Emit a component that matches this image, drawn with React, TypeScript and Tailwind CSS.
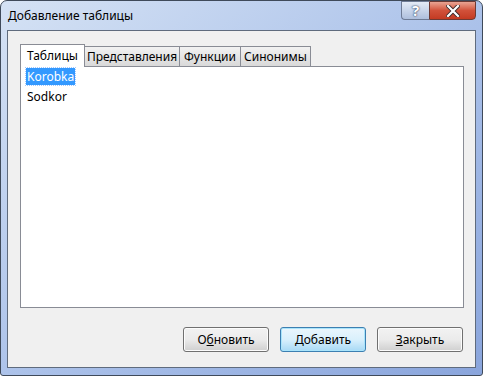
import React from 'react';

const font = { fontFamily: '"Noto Sans", "Open Sans", sans-serif' };

const tabs = ['Таблицы', 'Представления', 'Функции', 'Синонимы'];
const tabWidths = ['w-[65px]', 'w-[95px]', 'w-[61px]', 'w-[70px]'];

const DialogButton: React.FC<{ children: React.ReactNode; primary?: boolean }> = ({ children, primary }) => (
  <button
    className={`w-[86px] h-[25px] rounded-[3px] border text-[12px] text-black flex items-center justify-center ${
      primary
        ? 'border-[#3c7fb1] bg-gradient-to-b from-[#eaf6fd] via-[#d9f0fc] to-[#a7d9f5] shadow-[inset_0_0_0_1px_#a9e4fb]'
        : 'border-[#707070] bg-gradient-to-b from-[#f2f2f2] via-[#ebebeb] to-[#cfcfcf] shadow-[inset_0_0_0_1px_#fcfcfc]'
    }`}
  >
    {children}
  </button>
);

export default function App() {
  return (
    <div className="w-[483px] h-[376px] bg-white" style={font}>
      <div className="w-[483px] h-[376px] rounded-t-[7px] rounded-b-[3px] border border-[#3f4a5a] bg-gradient-to-br from-[#d5e2f4] via-[#adc3ea] to-[#8aa5dc] flex flex-col">
        {/* Title bar */}
        <div className="h-[29px] flex items-start justify-between">
          <div className="pl-[7px] pt-[6px] text-[12px] text-black">Добавление таблицы</div>
          <div className="flex mr-[6px]">
            <div className="w-[28px] h-[19px] border border-[#6d7b95] border-r-0 rounded-bl-[4px] bg-gradient-to-b from-[#e3ebf6] via-[#c8d5ea] to-[#aebfdd] flex items-center justify-center text-[15px] leading-none font-bold text-white [text-shadow:0_0_2px_#2c3e60,0_0_1px_#2c3e60]">
              ?
            </div>
            <div className="w-[47px] h-[19px] border border-[#6d3a34] rounded-br-[4px] bg-gradient-to-b from-[#e8a493] via-[#d1513a] to-[#c33a22] flex items-center justify-center">
              <svg width="14" height="12" viewBox="0 0 14 12">
                <path d="M2 1 L12 11 M12 1 L2 11" stroke="#3a2a2a" strokeWidth="4" strokeLinecap="square" />
                <path d="M2 1 L12 11 M12 1 L2 11" stroke="#ffffff" strokeWidth="2.2" strokeLinecap="square" />
              </svg>
            </div>
          </div>
        </div>

        {/* Client area */}
        <div className="mx-[6px] mb-[7px] flex-1 border border-[#5f6b7d] bg-[#f0f0f0] flex flex-col pl-[12px] pr-[11px] pt-[12px] pb-[15px]">
          <div className="flex items-end h-[23px]">
            {tabs.map((t, i) =>
              i === 0 ? (
                <div
                  key={t}
                  className={`${tabWidths[i]} h-[23px] border border-[#898c95] border-b-0 bg-white text-[12px] text-black flex items-center justify-center relative z-10 -mb-px pb-[1px]`}
                >
                  {t}
                </div>
              ) : (
                <div
                  key={t}
                  className={`${tabWidths[i]} h-[20px] border border-l-0 border-[#898c95] border-b-0 bg-gradient-to-b from-[#f2f2f2] to-[#d9d9d9] text-[12px] text-black flex items-center justify-center`}
                >
                  {t}
                </div>
              )
            )}
          </div>
          <div className="h-[242px] border border-[#898c95] bg-white pt-[1px] pl-[5px] text-[12px] text-black">
            <div className="flex">
              <span className="bg-[#3399ff] text-white px-[1px] h-[17px] leading-[17px] outline-1 outline-dotted outline-[#a0c8ff]">Korobka</span>
            </div>
            <div className="h-[17px] leading-[17px] mt-[3px] pl-[1px]">Sodkor</div>
          </div>
          <div className="flex-1" />
          <div className="flex justify-end gap-[11px] pr-[1px]">
            <DialogButton>
              О<span className="underline">б</span>новить
            </DialogButton>
            <DialogButton primary>Добавить</DialogButton>
            <DialogButton>
              <span className="underline">З</span>акрыть
            </DialogButton>
          </div>
        </div>
      </div>
    </div>
  );
}
